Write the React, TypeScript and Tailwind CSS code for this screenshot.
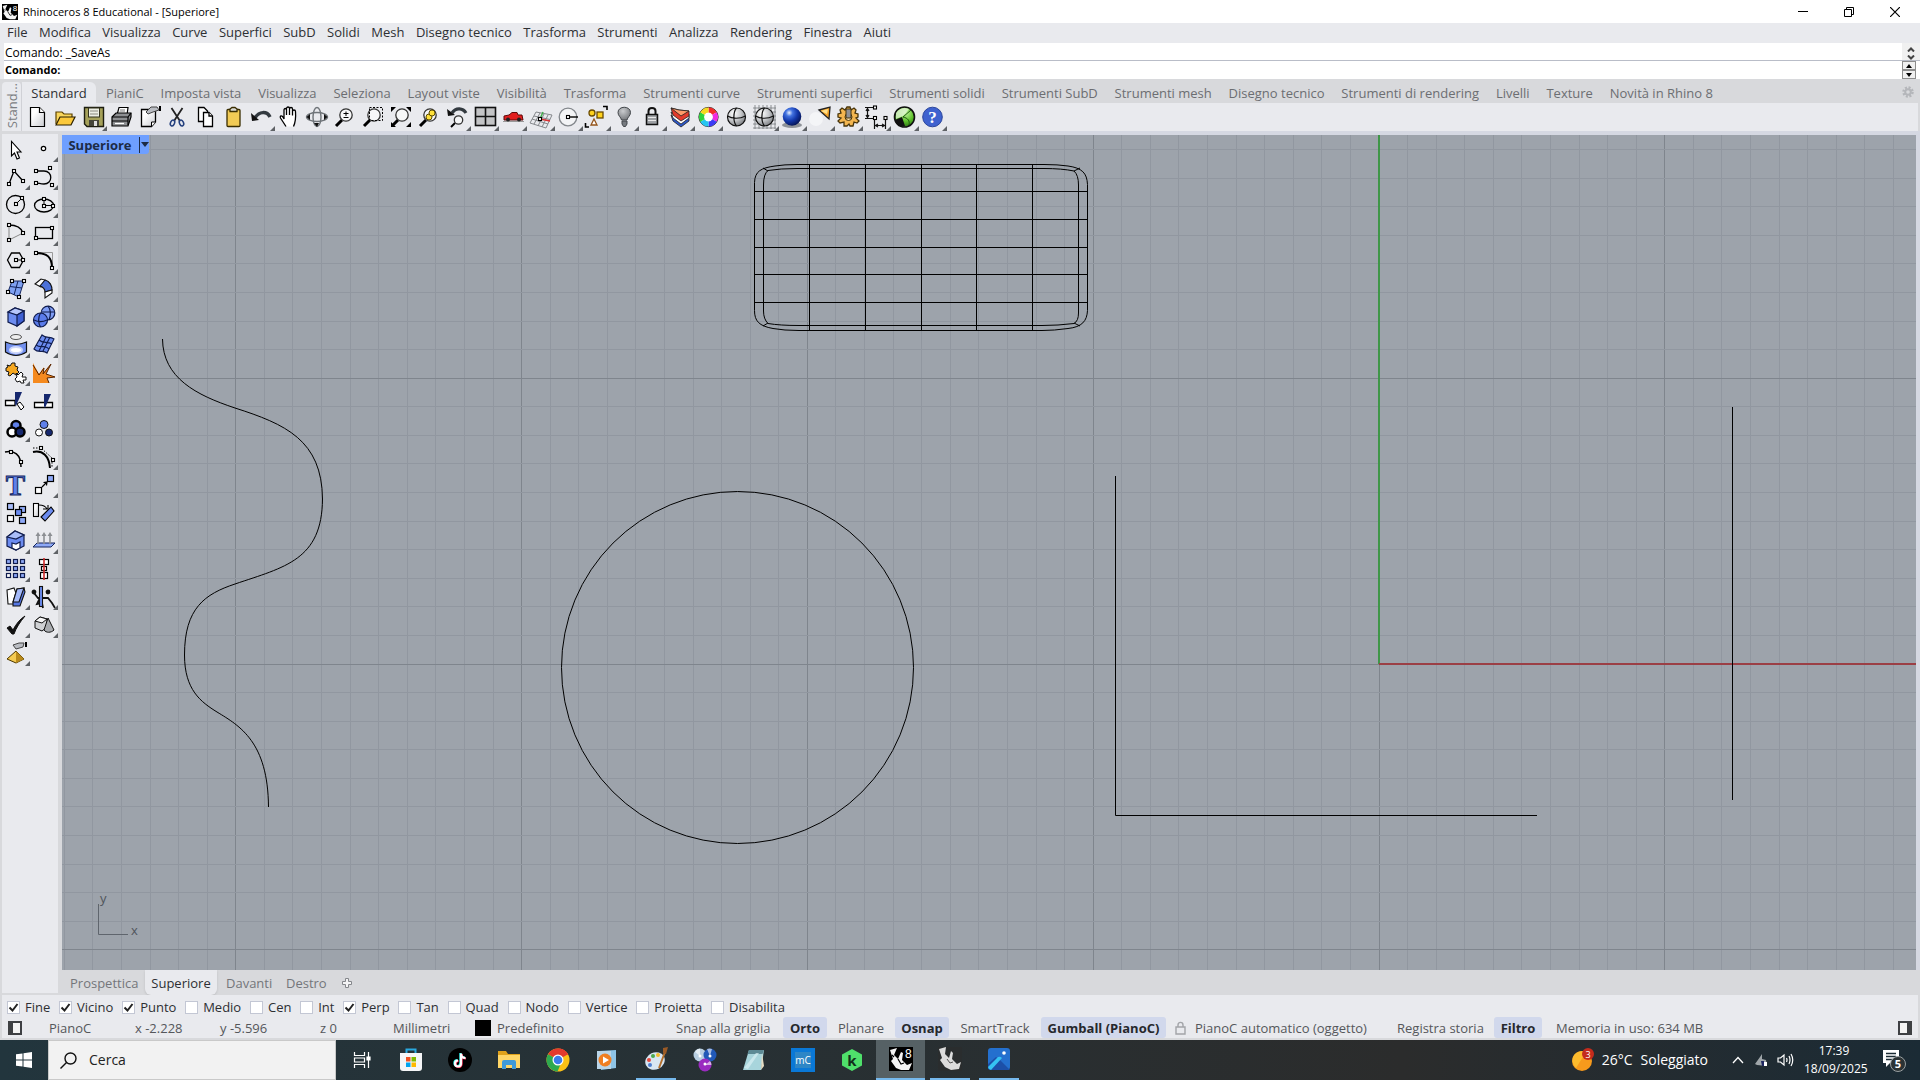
import type { ReactNode } from 'react';

const menus = [
  'File', 'Modifica', 'Visualizza', 'Curve', 'Superfici', 'SubD', 'Solidi', 'Mesh',
  'Disegno tecnico', 'Trasforma', 'Strumenti', 'Analizza', 'Rendering', 'Finestra', 'Aiuti',
];

const toolTabs = [
  'PianiC', 'Imposta vista', 'Visualizza', 'Seleziona', 'Layout viste', 'Visibilità', 'Trasforma',
  'Strumenti curve', 'Strumenti superfici', 'Strumenti solidi', 'Strumenti SubD', 'Strumenti mesh',
  'Disegno tecnico', 'Strumenti di rendering', 'Livelli', 'Texture', 'Novità in Rhino 8',
];

const osnaps = [
  { label: 'Fine', on: true },
  { label: 'Vicino', on: true },
  { label: 'Punto', on: true },
  { label: 'Medio', on: false },
  { label: 'Cen', on: false },
  { label: 'Int', on: false },
  { label: 'Perp', on: true },
  { label: 'Tan', on: false },
  { label: 'Quad', on: false },
  { label: 'Nodo', on: false },
  { label: 'Vertice', on: false },
  { label: 'Proietta', on: false },
  { label: 'Disabilita', on: false },
];

type Tool = { name: string; more?: boolean; art: ReactNode };

// gradients shared by the toolbar icons
function IconGradients() {
  return (
    <svg className="absolute h-0 w-0" aria-hidden="true">
      <defs>
        <linearGradient id="paper" x1="0" y1="0" x2="1" y2="1">
          <stop offset=".3" stopColor="#fff" />
          <stop offset="1" stopColor="#c9cbd0" />
        </linearGradient>
        <radialGradient id="metal" cx=".35" cy=".3" r=".8">
          <stop offset="0" stopColor="#fff" />
          <stop offset=".5" stopColor="#c6c8cb" />
          <stop offset="1" stopColor="#6f7276" />
        </radialGradient>
        <radialGradient id="bulb" cx=".4" cy=".3" r=".8">
          <stop offset="0" stopColor="#c9cbce" />
          <stop offset="1" stopColor="#6c6f73" />
        </radialGradient>
        <radialGradient id="blueball" cx=".35" cy=".3" r=".75">
          <stop offset="0" stopColor="#e8f0ff" />
          <stop offset=".25" stopColor="#4272e0" />
          <stop offset=".6" stopColor="#1236a8" />
          <stop offset="1" stopColor="#05124f" />
        </radialGradient>
        <radialGradient id="greenball" cx=".55" cy=".3" r=".8">
          <stop offset="0" stopColor="#c4f5a0" />
          <stop offset=".5" stopColor="#5fc22c" />
          <stop offset="1" stopColor="#1d5c0c" />
        </radialGradient>
      </defs>
    </svg>
  );
}

// small control-point handle used by most curve icons
function Pt({ x, y }: { x: number; y: number }) {
  return <rect x={x - 1.5} y={y - 1.5} width="3" height="3" fill="#fff" stroke="#000" strokeWidth="1.1" />;
}

const lens = (
  <>
    <path d="M5 23L11 17" stroke="#000" strokeWidth="3" />
    <circle cx="15" cy="12" r="6.200" fill="#f6f7f8" stroke="#333" strokeWidth="1.300" />
  </>
);

const topTools: Tool[] = [
  {
    name: 'Nuovo',
    art: (
      <g stroke="#000" strokeWidth="1.200">
        <path d="M7.500 4.500H16.500L21.500 9.500V23.500H7.500Z" fill="url(#paper)" />
        <path d="M16.500 4.500V9.500H21.500" fill="#fff" />
      </g>
    ),
  },
  {
    name: 'Apri',
    art: (
      <g stroke="#5c4200" strokeWidth="1.200">
        <path d="M5 21V9H11L13 11H21V14" fill="#f9d65c" />
        <path d="M5 22L9 14H24L20 22Z" fill="#fbc93c" stroke="#2b2000" />
      </g>
    ),
  },
  {
    name: 'Salva',
    more: true,
    art: (
      <>
        <path d="M5.500 4.500H24.500V23.500H8L5.500 21Z" fill="#a5a15a" stroke="#1d1d10" strokeWidth="1.400" />
        <rect x="9.500" y="5" width="11" height="9" fill="#eceee4" stroke="#33331d" />
        <path d="M11 8H19M11 11H19" stroke="#8a8a80" />
        <rect x="10" y="17" width="10" height="6" fill="#45453a" />
        <rect x="15" y="18" width="3" height="5" fill="#ddd" />
      </>
    ),
  },
  {
    name: 'Stampa',
    art: (
      <g stroke="#000" strokeWidth="1.200">
        <path d="M10 12L12 4.500H21L20 12" fill="#fff" />
        <path d="M5 14L9 10H24V14L21 23H5Z" fill="#8d8f92" />
        <path d="M5 14H21L24 10" fill="none" />
        <path d="M5 18H21M21 14V22" fill="none" />
        <path d="M8 20.500H17" stroke="#fff" />
        <path d="M13 7H18M12.500 9H18" stroke="#777" strokeWidth="1" />
      </g>
    ),
  },
  {
    name: 'Proprietà',
    art: (
      <>
        <path d="M6.500 6.500H20.500V19L16.500 23.500H6.500Z" fill="url(#paper)" stroke="#000" strokeWidth="1.300" />
        <path d="M16.500 23.500V19H20.500" fill="#fff" stroke="#000" />
        <path d="M11 9L16 4L22 4L24 7L18 9L13 11Z" fill="#b9bcc2" stroke="#444" />
        <path d="M25 3V8" stroke="#000" strokeWidth="2" />
      </>
    ),
  },
  {
    name: 'Taglia',
    art: (
      <g fill="none">
        <path d="M8.500 5L17 18M19.500 5L11 18" stroke="#222" strokeWidth="1.800" />
        <ellipse cx="9.500" cy="20" rx="2" ry="3" stroke="#24407e" strokeWidth="1.500" transform="rotate(25 9.500 20)" />
        <ellipse cx="18.500" cy="20" rx="2" ry="3" stroke="#24407e" strokeWidth="1.500" transform="rotate(-25 18.500 20)" />
      </g>
    ),
  },
  {
    name: 'Copia',
    art: (
      <g fill="#fff" stroke="#000" strokeWidth="1.300">
        <path d="M7.500 4.500H13L16.500 8V18.500H7.500Z" />
        <path d="M12.500 9.500H18L21.500 13V23.500H12.500Z" />
        <path d="M18 9.500V13H21.500" />
      </g>
    ),
  },
  {
    name: 'Incolla',
    art: (
      <g stroke="#3a2d00" strokeWidth="1.300">
        <rect x="8" y="6.500" width="13" height="17" rx="1" fill="#f2cb55" />
        <path d="M11 8.500V6L13 4.500H16L18 6V8.500Z" fill="#d9d9d2" />
      </g>
    ),
  },
  {
    name: 'Annulla',
    more: true,
    art: (
      <>
        <path d="M8 15C12 8 20 8 23 14" fill="none" stroke="#333a40" strokeWidth="3.500" />
        <path d="M4 10L12 17L5 18Z" fill="#111" />
      </>
    ),
  },
  {
    name: 'Panoramica',
    art: (
      <path
        d="M11 23.500L5.500 15C4.500 12.500 7 12 8.500 15L9 16V7C9 5 11.500 5 11.500 7V12V5.500C11.500 3.500 14.500 3.500 14.500 5.500V12V6C14.500 4 17.500 4 17.500 6V12.500V8.500C17.500 6.500 20.500 6.500 20.500 8.500C21 15 21 18 18.500 23.500"
        fill="#fff" stroke="#000" strokeWidth="1.300"
      />
    ),
  },
  {
    name: 'Ruota vista',
    art: (
      <g fill="none" stroke="#6f7479" strokeWidth="1.400">
        <ellipse cx="14" cy="14" rx="10.500" ry="4.500" />
        <ellipse cx="14" cy="14" rx="4" ry="9.500" />
        <path d="M7 11V17L3.500 14ZM21 11V17L24.500 14ZM11 20H16L14 24Z" fill="#111" stroke="none" />
      </g>
    ),
  },
  {
    name: 'Zoom dinamico',
    art: (
      <>
        {lens}
        <path d="M15 8.500V13M12.500 10.500H17.500M12.500 14.500H17.500" stroke="#000" />
      </>
    ),
  },
  {
    name: 'Zoom finestra',
    art: (
      <>
        {lens}
        <rect x="10.500" y="4.500" width="13" height="13" fill="none" stroke="#000" strokeDasharray="2 1.500" />
      </>
    ),
  },
  {
    name: 'Zoom estensioni',
    art: (
      <>
        {lens}
        <path d="M4 4H9L4 9ZM24 4H19L24 9ZM24 24H19L24 19ZM4 24V19L9 24Z" fill="#000" />
      </>
    ),
  },
  {
    name: 'Zoom selezione',
    art: (
      <>
        {lens}
        <circle cx="14" cy="14" r="3" fill="#ffe13a" stroke="#5a4b00" />
        <circle cx="17" cy="10" r="3" fill="#ffe13a" stroke="#5a4b00" />
      </>
    ),
  },
  {
    name: 'Annulla vista',
    more: true,
    art: (
      <>
        <path d="M9 10C13 4 20 5 23 10" fill="none" stroke="#333a40" strokeWidth="3.200" />
        <path d="M4 6L12 12L5 13Z" fill="#111" />
        <path d="M8 24L12 20" stroke="#000" strokeWidth="2" />
        <circle cx="15.500" cy="17" r="4.200" fill="#f6f7f8" stroke="#333" strokeWidth="1.300" />
      </>
    ),
  },
  {
    name: 'Viste',
    more: true,
    art: (
      <>
        <rect x="4.500" y="4.500" width="20" height="18" fill="#c3c4c6" stroke="#111" strokeWidth="1.600" />
        <path d="M14.500 4V23M4 13.500H25" stroke="#111" strokeWidth="1.600" />
      </>
    ),
  },
  {
    name: 'Vista destra',
    more: true,
    art: (
      <>
        <path d="M4 18.500H25" stroke="#999" />
        <path d="M5 17V13L10 12L13 9.500H18L19 12H23L24 17Z" fill="#e21f1f" stroke="#5d0a0a" />
        <circle cx="9" cy="16.500" r="2" fill="#222" />
        <circle cx="20" cy="16.500" r="2" fill="#222" />
      </>
    ),
  },
  {
    name: 'Piano di costruzione',
    more: true,
    art: (
      <g fill="none">
        <path d="M9 9L25 12L19 25L3 20ZM13 10L7 21M17 11L11 23M21 12L15 24M7 13L23 16.500M5 16L21 21" stroke="#85888c" />
        <path d="M13 16L16 9" stroke="#3fae4a" strokeWidth="1.500" />
        <path d="M13 16L23 18" stroke="#d33" strokeWidth="1.500" />
        <Pt x={13} y={16} />
      </g>
    ),
  },
  {
    name: 'Imposta piano',
    more: true,
    art: (
      <>
        <circle cx="13" cy="14" r="8.800" fill="#f3f4f6" stroke="#83878c" strokeWidth="1.300" />
        <path d="M13 14H23" stroke="#000" strokeWidth="1.400" />
        <Pt x={13} y={14} />
      </>
    ),
  },
  {
    name: 'Seleziona oggetti',
    more: true,
    art: (
      <g strokeWidth="1.300">
        <circle cx="9" cy="10" r="3" fill="#ffd21c" stroke="#6b4b00" />
        <rect x="14" y="9" width="6" height="6" fill="#ffd21c" stroke="#6b4b00" />
        <path d="M11 16L14 22H8Z" fill="#fff" stroke="#94541a" />
        <path d="M20 3.500H24V7M2.500 20V24H6" fill="none" stroke="#000" strokeWidth="1.600" />
      </g>
    ),
  },
  {
    name: 'Nascondi',
    more: true,
    art: (
      <g stroke="#43474b">
        <path d="M10.500 17C10 14 7 13 7 9.500C7 2.500 19.500 2.500 19.500 9.500C19.500 13 16.500 14 16 17Z" fill="url(#bulb)" />
        <path d="M11 18H16V21L14.500 23.500H12.500L11 21Z" fill="#777b80" />
      </g>
    ),
  },
  {
    name: 'Blocca',
    more: true,
    art: (
      <g stroke="#111" strokeWidth="1.500">
        <path d="M9.500 12V8C9.500 4 16.500 4 16.500 8V12" fill="none" strokeWidth="2" />
        <rect x="7.500" y="11.500" width="11" height="10" fill="#9da0a4" />
        <path d="M9 14.500H17M9 17.500H17" stroke="#e8e8e8" strokeWidth="1" />
      </g>
    ),
  },
  {
    name: 'Livelli',
    more: true,
    art: (
      <g stroke="#222" strokeWidth=".8">
        <path d="M4 12L6 18L14 24L22 18V13L14 19Z" fill="#2b56c8" />
        <path d="M4 9L6 15L14 21L22 15V11L14 16Z" fill="#fff" />
        <path d="M4 5L6 12L14 18L22 13V8L12 7Z" fill="#e23b2c" />
        <path d="M4 5L12 7L22 8L14 13Z" fill="#ff9c6a" />
      </g>
    ),
  },
  {
    name: 'Colore oggetto',
    more: true,
    art: (
      <g fill="none" strokeWidth="5">
        <circle cx="13.500" cy="14" r="9.600" stroke="#222" strokeWidth="1" fill="#fff" />
        <path d="M13.500 7A7 7 0 0 1 19.500 10.500" stroke="#f32c2c" />
        <path d="M19.500 10.500A7 7 0 0 1 19.500 17.500" stroke="#f02ce0" />
        <path d="M19.500 17.500A7 7 0 0 1 13.500 21" stroke="#3b3bf5" />
        <path d="M13.500 21A7 7 0 0 1 7.500 17.500" stroke="#25c6f0" />
        <path d="M7.500 17.500A7 7 0 0 1 7.500 10.500" stroke="#2fd43c" />
        <path d="M7.500 10.500A7 7 0 0 1 13.500 7" stroke="#f5d91e" />
      </g>
    ),
  },
  {
    name: 'Ombreggiato',
    art: (
      <g stroke="#111" strokeWidth="1.200">
        <circle cx="13.500" cy="14" r="9" fill="url(#metal)" />
        <path d="M13.500 5C10 9 10 19 13.500 23M4.500 13C9 16 17 16 22.500 13" fill="none" />
      </g>
    ),
  },
  {
    name: 'Modalità di visualizzazione',
    more: true,
    art: (
      <>
        <path d="M2 5H25M2 9H25M2 13H25M2 17H25M2 21H25M2 25H25M4 2V26M8 2V26M12 2V26M16 2V26M20 2V26M24 2V26" stroke="#75787c" strokeWidth=".8" />
        <g stroke="#111" strokeWidth="1.200">
          <circle cx="13.500" cy="14" r="9" fill="url(#metal)" />
          <path d="M13.500 5C10 9 10 19 13.500 23M4.500 13C9 16 17 16 22.500 13" fill="none" />
        </g>
      </>
    ),
  },
  {
    name: 'Render',
    more: true,
    art: (
      <>
        <ellipse cx="13" cy="22" rx="10" ry="3" fill="#8e9298" />
        <circle cx="13" cy="13.500" r="9.300" fill="url(#blueball)" />
      </>
    ),
  },
  {
    name: 'Riflettore',
    more: true,
    art: (
      <>
        <circle cx="9" cy="16" r="7" fill="#fff" opacity=".5" />
        <path d="M12 7L23 4L22 16Z" fill="#f5a428" stroke="#222" strokeWidth="1.300" />
        <path d="M14 8L21 6L20 11Z" fill="#ffe08a" />
      </>
    ),
  },
  {
    name: 'Opzioni',
    more: true,
    art: (
      <>
        <path
          d="M12 4H15L16 7L19 5L21 7L20 10L23 11V14L21 15L24 18L22 20L19 19L18 23H15L14 21L12 23H9L9 19L5 20L3 18L6 15L3 14V11L6 10L5 7L7 5L10 7Z"
          fill="#f3b650" stroke="#47340a" strokeWidth="1.300"
        />
        <circle cx="13.500" cy="14" r="3.500" fill="#fbe2ae" stroke="#47340a" />
        <rect x="11" y="6" width="5" height="9" fill="#8f9196" stroke="#47340a" />
      </>
    ),
  },
  {
    name: 'Quota',
    more: true,
    art: (
      <g stroke="#111" strokeWidth="1.200" fill="none">
        <path d="M2 4.500H12M2 15.500H10M4.500 6V14M3 8L4.500 5.500L6 8M3 12L4.500 14.500L6 12" />
        <path d="M11.500 16V26M22.500 16V26M13 22.500H21M15 21L12.500 22.500L15 24M19 21L21.500 22.500L19 24" />
        <Pt x={12} y={4.500} />
        <Pt x={12} y={15} />
        <Pt x={22.500} y={15} />
      </g>
    ),
  },
  {
    name: 'Materiale',
    more: true,
    art: (
      <>
        <circle cx="13.500" cy="14" r="10" fill="url(#greenball)" stroke="#111" strokeWidth="1.600" />
        <path d="M5 10C8 5 14 4 18 6L12 13L5 16Z" fill="#e2f5d6" opacity=".8" />
        <path d="M4 17L11 14L14 23C9 24 5 22 4 17Z" fill="#111" />
        <path d="M12 14L20 7M12 14C17 15 19 18 18 22" fill="none" stroke="#1f5a10" />
      </>
    ),
  },
  {
    name: 'Aiuto',
    more: true,
    art: (
      <>
        <circle cx="13.500" cy="14" r="9.800" fill="#3f62cf" stroke="#2a459c" />
        <text x="13.500" y="20" textAnchor="middle" fontSize="17" fontFamily="Liberation Serif, serif" fontWeight="700" fill="#fff">?</text>
      </>
    ),
  },
];

const sideTools: Tool[] = [
  {
    name: 'Seleziona',
    art: <path d="M9.500 7.500V22L12.500 19L15 25L17.500 24L15 18H19Z" fill="#fff" stroke="#000" strokeWidth="1.100" />,
  },
  { name: 'Punto', more: true, art: <circle cx="13.500" cy="14.500" r="2.200" fill="#fff" stroke="#000" strokeWidth="1.200" /> },
  {
    name: 'Polilinea',
    more: true,
    art: (
      <g>
        <path d="M7 22L12 9L21 19" fill="none" stroke="#000" strokeWidth="1.300" />
        <Pt x={7} y={22} /><Pt x={12} y={9} /><Pt x={21} y={19} />
      </g>
    ),
  },
  {
    name: 'Curva',
    more: true,
    art: (
      <g>
        <path d="M6 9H14C23 9 23 22 14 22C10 22 9 21 6 21" fill="none" stroke="#000" strokeWidth="1.300" />
        <Pt x={6} y={9} /><Pt x={20} y={6} /><Pt x={6} y={21} /><Pt x={22} y={23} />
      </g>
    ),
  },
  {
    name: 'Cerchio',
    more: true,
    art: (
      <g>
        <circle cx="13.500" cy="14.500" r="9" fill="none" stroke="#000" strokeWidth="1.300" />
        <path d="M14 14L20 8" stroke="#000" />
        <Pt x={14} y={14} /><Pt x={20} y={8} />
      </g>
    ),
  },
  {
    name: 'Ellisse',
    more: true,
    art: (
      <g>
        <ellipse cx="14" cy="15.500" rx="9.500" ry="6.500" fill="none" stroke="#000" strokeWidth="1.300" />
        <path d="M14 9V15.500H23" fill="none" stroke="#000" />
        <Pt x={14} y={9} /><Pt x={14} y={16} /><Pt x={23} y={16} />
      </g>
    ),
  },
  {
    name: 'Arco',
    more: true,
    art: (
      <g>
        <path d="M7 7V22L21 15" fill="none" stroke="#888" />
        <path d="M7 7C13 7 19 9 21 15" fill="none" stroke="#000" strokeWidth="1.500" />
        <Pt x={7} y={7} /><Pt x={7} y={22} /><Pt x={21} y={15} />
      </g>
    ),
  },
  {
    name: 'Rettangolo',
    more: true,
    art: (
      <g>
        <rect x="5.500" y="9.500" width="17" height="11" fill="none" stroke="#000" strokeWidth="1.300" />
        <Pt x={22} y={10} /><Pt x={6} y={20} />
      </g>
    ),
  },
  {
    name: 'Poligono',
    more: true,
    art: (
      <g>
        <path d="M5.500 14L9.500 7H17.500L21.500 14L17.500 21.500H9.500Z" fill="none" stroke="#000" strokeWidth="1.300" />
        <path d="M14 14H21" stroke="#000" />
        <Pt x={14} y={14} /><Pt x={21} y={14} />
      </g>
    ),
  },
  {
    name: 'Raccordo',
    more: true,
    art: (
      <g>
        <path d="M6 6.500H22.500V22" fill="none" stroke="#999" />
        <path d="M6 7C17 7 22 11 22 22" fill="none" stroke="#000" strokeWidth="2" />
        <Pt x={6} y={7} /><Pt x={22} y={22} />
      </g>
    ),
  },
  {
    name: 'Superficie',
    more: true,
    art: (
      <g>
        <path d="M10 7H22L17 23L6 18Z" fill="#7ea0f2" stroke="#14255e" />
        <path d="M8 12.500L20 14M16 7L12 21" stroke="#14255e" />
        <Pt x={10} y={7} /><Pt x={22} y={7} /><Pt x={6} y={18} /><Pt x={17} y={23} />
      </g>
    ),
  },
  {
    name: 'Raccordo superfici',
    more: true,
    art: (
      <g stroke="#111" strokeWidth="1.100">
        <path d="M5 10L11 5L15 6L11 13Z" fill="#fff" />
        <path d="M15 6C20 7 22 12 22 16L15 18C15 14 13 13 10 12Z" fill="#4c71d8" />
        <path d="M22 16V19L15 24V18Z" fill="#fff" />
      </g>
    ),
  },
  {
    name: 'Parallelepipedo',
    more: true,
    art: (
      <g stroke="#101c4d" strokeWidth="1.200" transform="translate(0 1)">
        <path d="M6 9L13 5L22 8V18L15 23L6 19Z" fill="#6c8cf0" />
        <path d="M6 9L13 5L22 8L15 12Z" fill="#b6c7fb" />
        <path d="M15 12L22 8V18L15 23Z" fill="#3e5fd2" />
      </g>
    ),
  },
  {
    name: 'Booleana',
    more: true,
    art: (
      <g stroke="#101c4d" strokeWidth="1.200">
        <circle cx="18" cy="11" r="6.800" fill="#7f9df5" />
        <circle cx="10.500" cy="18" r="7" fill="#5b7cea" />
        <path d="M4 18C8 20 13 20 17 18M10.500 11C8 15 8 21 10.500 25M18 4C21 8 21 13 19 18M12 10H25" fill="none" />
      </g>
    ),
  },
  {
    name: 'Estrai curve',
    more: true,
    art: (
      <g stroke="#111" transform="translate(0 2)">
        <ellipse cx="14" cy="5" rx="5.500" ry="2.500" fill="#eee" stroke="#555" />
        <path d="M3.500 10C10 13 18 13 24.500 10V20C18 24.500 10 24.500 3.500 20Z" fill="#7290ee" strokeWidth="1.200" />
        <ellipse cx="14" cy="18" rx="6" ry="3" fill="#fff" stroke="#ccd6fa" strokeWidth="2" />
      </g>
    ),
  },
  {
    name: 'Mesh',
    more: true,
    art: (
      <g stroke="#101c4d" strokeWidth="1.100" transform="translate(0 1)">
        <path d="M12 4C16 8 20 5 24 8L17 22C13 18 9 23 4 18Z" fill="#6c8cf0" />
        <path d="M9 9C13 13 17 10 22 13M6 14C11 18 15 13 19 18M16 6L9 20M20 6L13 20" fill="none" />
      </g>
    ),
  },
  {
    name: 'Esplodi gruppo',
    more: true,
    art: (
      <g stroke="#111" transform="translate(0 2)">
        <path d="M5 5L8 6L10 3L13 3L13 6L16 7L15 10L17 12L14 15L11 13L8 16L6 15L7 12L4 11L4 8L6 7Z" fill="#f6a821" />
        <path d="M14 13L16 15L19 12L21 14L20 17L24 17L24 20L21 20L22 23L19 23L18 21L15 22L13 19L15 17Z" fill="#fff" />
      </g>
    ),
  },
  {
    name: 'Esplodi',
    art: (
      <g transform="translate(0 2)">
        <path d="M3 23V3L9 14L14 7L13 13L21 4L16 14L25 17L17 18L19 23Z" fill="#f58a1f" />
        <path d="M3 5L9 15L14 8L13 14L21 4L16 14L25 17L17 18L19 23" fill="none" stroke="#5a2500" />
      </g>
    ),
  },
  {
    name: 'Tronca',
    art: (
      <g transform="translate(0 2)">
        <path d="M3.500 12.500H13V17.500H3.500Z" fill="#fff" stroke="#000" strokeWidth="1.300" />
        <path d="M15 16L18 14L22 19L19 22Z" fill="#fff" stroke="#000" />
        <path d="M13 4H20L14 18L13 16Z" fill="#16286e" />
      </g>
    ),
  },
  {
    name: 'Dividi',
    art: (
      <g transform="translate(0 2)">
        <path d="M4.500 14.500H22.500V19.500H4.500Z" fill="#fff" stroke="#000" strokeWidth="1.300" />
        <path d="M14 6H21L15 20L14 18Z" fill="#16286e" />
      </g>
    ),
  },
  {
    name: 'Raggruppa',
    more: true,
    art: (
      <g stroke="#000" strokeWidth="2.500" transform="translate(0 1)">
        <circle cx="14" cy="10.500" r="4.500" fill="#5f80ea" />
        <circle cx="10" cy="17" r="4.500" fill="#fff" />
        <circle cx="18" cy="17" r="4.500" fill="#16286e" />
      </g>
    ),
  },
  {
    name: 'Separa',
    art: (
      <g stroke="#111" transform="translate(0 1)">
        <circle cx="14" cy="9.500" r="4" fill="#5f80ea" />
        <circle cx="9" cy="17.500" r="3.500" fill="#fff" />
        <circle cx="19" cy="17.500" r="3.500" fill="#16286e" />
      </g>
    ),
  },
  {
    name: 'Modifica punti',
    art: (
      <g transform="translate(0 1)">
        <path d="M3 9C12 7 19 11 19 24" fill="none" stroke="#000" strokeWidth="1.500" />
        <Pt x={9} y={9} /><Pt x={19} y={19} />
      </g>
    ),
  },
  {
    name: 'Punti di controllo',
    more: true,
    art: (
      <g transform="translate(0 1)">
        <path d="M3 5H11L22 15V24" fill="none" stroke="#000" strokeDasharray="1.500 1.500" />
        <path d="M3 9C13 7 19 13 20 25" fill="none" stroke="#000" strokeWidth="2" />
        <Pt x={11} y={5} /><Pt x={23} y={17} />
      </g>
    ),
  },
  {
    name: 'Testo',
    art: (
      <text x="13.500" y="25" textAnchor="middle" fontSize="29" fontFamily="Liberation Serif, serif" fontWeight="700" fill="#5f80ea" stroke="#14255e">
        T
      </text>
    ),
  },
  {
    name: 'Sposta',
    more: true,
    art: (
      <g stroke="#000" strokeWidth="1.200" transform="translate(0 2)">
        <rect x="17.500" y="3.500" width="6" height="6" fill="#8ea9f7" />
        <rect x="5.500" y="15.500" width="6" height="6" fill="#fff" />
        <path d="M12 15L17 10M13.500 10.500L17 10L16.500 13.500" fill="none" />
      </g>
    ),
  },
  {
    name: 'Copia oggetti',
    art: (
      <g stroke="#000" strokeWidth="1.200">
        <rect x="5.500" y="5.500" width="6" height="6" fill="#a9bdf9" />
        <rect x="5.500" y="17.500" width="6" height="6" fill="#fff" />
        <rect x="17.500" y="8.500" width="6" height="6" fill="#8ea9f7" />
        <rect x="13.500" y="11.500" width="6" height="6" fill="#6c8cf0" />
        <rect x="17.500" y="19.500" width="6" height="6" fill="#8ea9f7" />
      </g>
    ),
  },
  {
    name: 'Ruota',
    art: (
      <g stroke="#000" strokeWidth="1.100" transform="translate(0 1)">
        <rect x="3.500" y="4.500" width="5" height="13" fill="url(#paper)" />
        <path d="M9 6C13 6 16 8 17 10M13 10H18V6" fill="none" />
        <path d="M11 18L21 8L24 12L15 22Z" fill="#6c8cf0" />
      </g>
    ),
  },
  {
    name: 'Scala',
    more: true,
    art: (
      <g stroke="#101c4d" strokeWidth="1.200" transform="translate(0 1)">
        <path d="M5 10L13 4L22 8V19L14 23L5 19Z" fill="#6c8cf0" />
        <path d="M5 10L13 4L22 8L14 12Z" fill="#a9bdf9" />
        <path d="M10 16L14 17L18 15V21L14 23L10 21Z" fill="#fff" />
      </g>
    ),
  },
  {
    name: 'Estrudi',
    more: true,
    art: (
      <g transform="translate(0 2)">
        <path d="M3 19L7 15H25L21 19Z" fill="#8ea9f7" stroke="#14255e" />
        <path d="M8 16V6M14 16V6M20 16V6" stroke="#8c8f93" strokeWidth="1.600" />
        <path d="M5.500 8L8 4L10.500 8ZM11.500 8L14 4L16.500 8ZM17.500 8L20 4L22.500 8Z" fill="#8c8f93" />
      </g>
    ),
  },
  {
    name: 'Serie',
    more: true,
    art: (
      <g stroke="#101c4d" strokeWidth="1.200">
        {[7, 14, 21].map((y) =>
          [4, 11, 18].map((x) => (
            <rect key={`${x}-${y}`} x={x + 0.5} y={y - 1.5} width="4" height="4" fill={x === 4 && y === 21 ? '#fff' : '#8ea9f7'} />
          )),
        )}
      </g>
    ),
  },
  {
    name: 'Allinea',
    more: true,
    art: (
      <g fill="#fff" stroke="#000" strokeWidth="1.200" transform="translate(0 1)">
        <rect x="9.500" y="4.500" width="9" height="5" />
        <rect x="11.500" y="11.500" width="5" height="4" />
        <rect x="10.500" y="17.500" width="7" height="6" />
        <path d="M14 3V25" stroke="#d02a2a" strokeWidth="1.600" />
      </g>
    ),
  },
  {
    name: 'Orienta',
    more: true,
    art: (
      <g stroke="#111" strokeWidth="1.100" transform="translate(0 2)">
        <path d="M5 6L12 4L14 9V20L6 20Z" fill="#fff" />
        <path d="M15 5L22 4L23 8L18 22L11 22V18Z" fill="#5577e4" />
        <path d="M15 5L22 4L17 18L11 18Z" fill="#a4b9f8" />
      </g>
    ),
  },
  {
    name: 'Piega',
    more: true,
    art: (
      <g stroke="#111" strokeWidth="1.800" fill="none" transform="translate(0 2)">
        <path d="M4 9L8 14H18L22 19L25 24M10 14L7 20L12 19L13 24" />
        <circle cx="4" cy="8" r="1.500" fill="#111" />
        <circle cx="18" cy="8" r="1.500" fill="#111" />
        <rect x="9.500" y="2.500" width="3" height="20" fill="#6c8cf0" strokeWidth="1.100" />
      </g>
    ),
  },
  {
    name: 'Verifica',
    more: true,
    art: <path d="M5 18L8 16L11 20C14 14 18 9 23 6C18 12 14 18 12 24H10Z" fill="#111" stroke="#111" />,
  },
  {
    name: 'Solidi',
    more: true,
    art: (
      <g stroke="#111" transform="translate(0 2)">
        <path d="M5 9L10 5L17 7V15L12 19L5 16Z" fill="#cfd1d4" />
        <path d="M5 9L10 5L17 7L12 11Z" fill="#f6f6f7" />
        <path d="M18 6L24 18C21 21 16 21 14 18Z" fill="#a9acb0" />
      </g>
    ),
  },
  {
    name: 'Evidenzia',
    more: true,
    art: (
      <g transform="translate(0 2)">
        <path d="M14 11L5 19L14 23L22 19Z" fill="#f4ca50" stroke="#4b3600" />
        <path d="M14 11V23L22 19Z" fill="#b98a1c" />
        <path d="M11 5L17 3L22 3L21 7L14 9Z" fill="#b9bcc2" stroke="#444" />
        <path d="M24 2V7" stroke="#000" strokeWidth="2" />
      </g>
    ),
  },
];

function ToolButton({ tool }: { tool: Tool }) {
  return (
    <button aria-label={tool.name} className="h-7 w-7 shrink-0">
      <svg viewBox="0 0 28 28" className="h-7 w-7">
        {tool.art}
        {tool.more && <path d="M28 23V28H23Z" fill="#5f6266" />}
      </svg>
    </button>
  );
}

function RhinoMark({ className }: { className: string }) {
  return (
    <svg viewBox="0 0 24 24" className={className}>
      <rect width="24" height="24" fill="#000" />
      <path d="M1 3L8 1L5 8L9 12L12 5L14 6L13 13L18 18L23 16L20 23L12 23L7 21L2 14L4 12Z" fill="#f4f4f4" />
      <path d="M9 12L12 17L15 16M3 8L5 10" fill="none" stroke="#000" strokeWidth="1.200" />
      <text x="16" y="11" fontSize="12" fontFamily="Liberation Sans, sans-serif" fill="#fff">8</text>
    </svg>
  );
}

function TitleBar() {
  return (
    <header className="flex h-[23px] items-center bg-white pr-[2px] pl-[2px] text-black">
      <RhinoMark className="h-4 w-4" />
      <h1 className="pl-[5px] text-[11px]">Rhinoceros 8 Educational - [Superiore]</h1>
      <div className="ml-auto flex h-full">
        <button aria-label="Riduci a icona" className="flex w-[46px] items-center justify-center">
          <svg viewBox="0 0 10 10" className="h-[10px] w-[10px]"><path d="M0 4.500H10" stroke="#000" /></svg>
        </button>
        <button aria-label="Ripristina" className="flex w-[46px] items-center justify-center">
          <svg viewBox="0 0 10 10" className="h-[10px] w-[10px]" fill="none" stroke="#000">
            <path d="M.5 2.500H7.500V9.500H.5ZM2.500 2.500V.5H9.500V7.500H7.500" />
          </svg>
        </button>
        <button aria-label="Chiudi" className="flex w-[46px] items-center justify-center">
          <svg viewBox="0 0 10 10" className="h-[10px] w-[10px]"><path d="M0 0L10 10M10 0L0 10" stroke="#000" strokeWidth="1.200" /></svg>
        </button>
      </div>
    </header>
  );
}

function CommandArea() {
  return (
    <section className="flex h-9 bg-white text-black">
      <div className="w-1 bg-[#e9eaee]" />
      <div className="flex min-w-0 flex-1 flex-col">
        <p className="h-[18px] border-b border-[#b9bdc8] pt-[2px] pl-px text-[12px] leading-[15px]">Comando: _SaveAs</p>
        <label className="flex h-[18px] items-center pl-px text-[11px] font-bold">
          Comando:
          <input className="ml-1 h-4 flex-1 outline-none" />
        </label>
      </div>
      <div className="flex w-[18px] flex-col">
        <div className="flex h-[18px] flex-col items-center justify-between border-b border-[#b9bdc8] bg-[#f0f0f0] pt-1">
          <svg viewBox="0 0 8 5" className="h-[5px] w-2"><path d="M1 4.500L4 1.500L7 4.500" fill="none" stroke="#444" strokeWidth="2" /></svg>
          <svg viewBox="0 0 8 5" className="h-[5px] w-2"><path d="M1 .5L4 3.500L7 .5" fill="none" stroke="#444" strokeWidth="2" /></svg>
        </div>
        <button aria-label="Su" className="flex h-[9px] w-[14px] items-center justify-center border border-[#8d8d8d] bg-[#f0f0f0]">
          <svg viewBox="0 0 6 4" className="h-1 w-[6px]"><path d="M3 0L6 4H0Z" /></svg>
        </button>
        <button aria-label="Giù" className="flex h-[9px] w-[14px] items-center justify-center border border-[#8d8d8d] bg-[#f0f0f0]">
          <svg viewBox="0 0 6 4" className="h-1 w-[6px]"><path d="M0 0H6L3 4Z" /></svg>
        </button>
      </div>
    </section>
  );
}

function ToolbarArea() {
  return (
    <section className="flex bg-[#d8d9dc] pl-[2px]">
      <div className="mt-[3px] flex w-5 items-end justify-center rounded-t border-r border-[#d0d1d6] bg-[#e9eaee] pb-[3px]">
        <span className="rotate-180 text-[13px] leading-4 text-[#7b7d81] [writing-mode:vertical-rl]">Stand...</span>
      </div>
      <div className="min-w-0 flex-1">
        <div className="flex h-6 items-end text-[13px] text-[#6c6e72]">
          <button className="h-[21px] w-[74px] rounded-tr-md bg-[#e9eaee] pt-px text-[#2d2f33]">Standard</button>
          <nav className="ml-[10px] flex h-[21px] w-[1607px] items-center justify-between pt-px">
            {toolTabs.map((tab) => (
              <button key={tab} className="whitespace-nowrap">{tab}</button>
            ))}
          </nav>
          <button aria-label="Opzioni barra" className="mr-[6px] mb-[5px] ml-auto">
            <svg viewBox="0 0 12 12" className="h-3 w-3">
              <circle cx="6" cy="6" r="4.500" fill="none" stroke="#b4b6ba" strokeWidth="2.500" strokeDasharray="2 1.530" />
              <circle cx="6" cy="6" r="2.800" fill="none" stroke="#b4b6ba" strokeWidth="2" />
            </svg>
          </button>
        </div>
        <div className="mr-[2px] flex h-7 bg-[#e9eaee] pl-px">
          {topTools.map((tool) => (
            <ToolButton key={tool.name} tool={tool} />
          ))}
        </div>
      </div>
    </section>
  );
}

const STEP = 28.58;
const ORIGIN = { x: 1317, y: 529 };

// grid lines every STEP px around the construction plane origin, every tenth one is major
function gridLines(origin: number, from: number, to: number) {
  const lines: { at: number; major: boolean }[] = [];
  for (let i = from; i <= to; i++) {
    lines.push({ at: Math.floor(origin + i * STEP) + 0.5, major: i % 10 === 0 });
  }
  return lines;
}

function Viewport() {
  const cols = gridLines(ORIGIN.x, -46, 40);
  const rows = gridLines(ORIGIN.y, -18, 20);

  return (
    <main className="relative min-h-0 flex-1 overflow-hidden bg-[#9da3ab]">
      <svg className="absolute inset-0 h-full w-full" fill="none">
        <g strokeWidth="1">
          {cols.map((l) => (
            <path key={`c${l.at}`} d={`M${l.at} 0V2000`} stroke={l.major ? '#7f858d' : '#9197a0'} />
          ))}
          {rows.map((l) => (
            <path key={`r${l.at}`} d={`M0 ${l.at}H4000`} stroke={l.major ? '#7f858d' : '#9197a0'} />
          ))}
        </g>
        <path d="M1317 0V529" stroke="#3f9648" strokeWidth="2" />
        <path d="M1317 529H4000" stroke="#9b3f45" strokeWidth="2" />

        <g stroke="#000">
          {/* rounded box with its isocurves */}
          <path d="M692.500 47.500C693 36 699 33 713 31Q722 29.500 735 29.500H982Q996 29.500 1006 31C1020 33 1025 38 1025.500 49.500V175.500C1025 186 1020 192 1006 193.500Q992 195.500 980 195.500H737Q722 195.500 711 193.500C697 191 692.500 186 692.500 175.500Z" />
          <path d="M701.500 50Q701.500 39 706 35.500Q718 33.500 735 33.500H982Q1000 33.500 1012 36Q1016.500 40 1016.500 50V178Q1016.500 186 1012 188.500Q996 190.500 980 190.500H737Q718 190.500 706 188.500Q701.500 184 701.500 176Z" />
          <path d="M747.500 29V195M803.500 29V195M859.500 29V195M914.500 29V195M970.500 29V195" />
          <path d="M692 56.500H1025M692 84.500H1025M692 112.500H1025M692 139.500H1025M692 167.500H1025" />
          <path d="M701 33L706 36M1018 33L1012 36M701 191L706 188M1018 191L1012 188" />

          <path d="M100.500 204C101 243 134 260 173 273C223 289 260 305 260.500 364C260 425 223 432 173 449C143 459 122.500 473 122.500 520C122.500 555 139 567 155 577C178 591 206 607 206.500 672" />
          <circle cx="675.500" cy="532.500" r="176" />
          <path d="M1053.500 341V680.500H1475" />
          <path d="M1670.500 272V665" />
        </g>

        <path d="M36.500 769V799.500H66" stroke="#5f656d" />
        <g fill="#50555c" fontSize="13">
          <text x="38" y="768">y</text>
          <text x="69" y="800">x</text>
        </g>
      </svg>

      <div className="relative flex h-[19px] w-[87px] rounded-br-[3px] bg-[#6e9fff] text-[13px] font-bold text-[#1d2b45]">
        <button className="w-[76px]">Superiore</button>
        <button aria-label="Menu vista" className="flex flex-1 items-center justify-center">
          <span className="h-4 w-px bg-[#1d2b45]" />
          <svg viewBox="0 0 8 5" className="ml-px h-[5px] w-2"><path d="M0 0H8L4 5Z" fill="#1d2b45" /></svg>
        </button>
      </div>
    </main>
  );
}

function ViewTabs() {
  return (
    <nav className="flex h-[25px] items-center bg-[#d8d9dc] pl-2 text-[13px] text-[#74767a]">
      <button className="w-[66px]">Prospettica</button>
      <button className="mx-[9px] h-full w-[72px] rounded-b-md bg-[#e9eaee] text-[#2d2f33] shadow-sm">Superiore</button>
      <button className="w-11">Davanti</button>
      <button className="mr-5 ml-4 w-9">Destro</button>
      <button aria-label="Nuova vista">
        <svg viewBox="0 0 10 10" className="h-[10px] w-[10px]">
          <path d="M3.500 .5H6.500V3.500H9.500V6.500H6.500V9.500H3.500V6.500H.5V3.500H3.500Z" fill="#f4f4f5" stroke="#85878b" />
        </svg>
      </button>
    </nav>
  );
}

function OsnapBar() {
  return (
    <div className="pl-[5px]">
      <div className="flex h-[22px] w-[778px] items-center justify-between pt-[2px] text-[13px] text-[#2d2f33]">
        {osnaps.map((o) => (
          <label key={o.label} className="flex items-center gap-[5px]">
            <span className="grid h-[13px] w-[13px] place-items-center">
              <input
                type="checkbox"
                defaultChecked={o.on}
                className="peer col-start-1 row-start-1 h-[13px] w-[13px] appearance-none border border-[#c3c7d4] bg-white"
              />
              <svg viewBox="0 0 11 11" className="pointer-events-none invisible col-start-1 row-start-1 h-[11px] w-[11px] peer-checked:visible">
                <path d="M1.500 5.500L4.500 8.500L9.500 2" fill="none" stroke="#222" strokeWidth="2" />
              </svg>
            </span>
            {o.label}
          </label>
        ))}
      </div>
    </div>
  );
}

function StatusBar() {
  const pill = 'h-[21px] rounded-[3px] bg-[#d1d8ec] font-bold text-[#26282c]';
  return (
    <div className="flex h-[21px] items-center whitespace-nowrap px-[6px] text-[13px] text-[#55575b]">
      <button aria-label="Pannello sinistro" className="mr-[27px]">
        <svg viewBox="0 0 14 14" className="h-[14px] w-[14px]"><path d="M1 1H13V13H1Z" fill="#f4f4f4" stroke="#3e4043" strokeWidth="2" /><path d="M1 1H5V13H1Z" fill="#3e4043" /></svg>
      </button>
      <button className="w-[86px] text-left">PianoC</button>
      <span className="w-[85px]">x -2.228</span>
      <span className="w-[100px]">y -5.596</span>
      <span className="w-[73px]">z 0</span>
      <button className="w-[82px] text-left">Millimetri</button>
      <button className="flex w-[201px] items-center gap-[6px]">
        <span className="h-4 w-4 bg-black" />
        Predefinito
      </button>
      <button className="w-[107px] text-left">Snap alla griglia</button>
      <button className={`w-11 ${pill}`}>Orto</button>
      <button className="w-[68px]">Planare</button>
      <button className={`w-[54px] ${pill}`}>Osnap</button>
      <button className="w-[92px]">SmartTrack</button>
      <button className={`w-[125px] ${pill}`}>Gumball (PianoC)</button>
      <button className="ml-[9px] flex w-[222px] items-center gap-[9px]">
        <svg viewBox="0 0 11 14" className="h-[14px] w-[11px]" fill="none" stroke="#a2a4a8" strokeWidth="1.400">
          <path d="M1 6H10V13H1ZM3 6V4C3 .5 8 .5 8 4V6" />
        </svg>
        PianoC automatico (oggetto)
      </button>
      <button className="w-[97px] text-left">Registra storia</button>
      <button className={`mr-[14px] w-12 ${pill}`}>Filtro</button>
      <span>Memoria in uso: 634 MB</span>
      <button aria-label="Pannello destro" className="ml-auto">
        <svg viewBox="0 0 14 14" className="h-[14px] w-[14px]"><path d="M1 1H13V13H1Z" fill="#f4f4f4" stroke="#3e4043" strokeWidth="2" /><path d="M9 1H13V13H9Z" fill="#3e4043" /></svg>
      </button>
    </div>
  );
}

const apps: { name: string; state?: 'open' | 'active'; art: ReactNode }[] = [
  {
    name: 'Visualizzazione attività',
    art: (
      <g fill="none" stroke="#fff" strokeWidth="1.200">
        <path d="M4.500 4V7.500H14.500V4M4.500 20V16.500H14.500V20M4.500 10H14.500V14H4.500ZM18.500 4V20" />
        <path d="M17 9H20V12H17Z" fill="#fff" />
      </g>
    ),
  },
  {
    name: 'Microsoft Store',
    art: (
      <>
        <path d="M7.500 6V1.500H16.500V6" fill="none" stroke="#2aa9e0" strokeWidth="2" />
        <path d="M1 5H23V20Q23 23 20 23H4Q1 23 1 20Z" fill="#f5f6f7" />
        <path d="M7 9H11.500V13.500H7Z" fill="#f05022" />
        <path d="M12.500 9H17V13.500H12.500Z" fill="#7fba00" />
        <path d="M7 14.500H11.500V19H7Z" fill="#00a4ef" />
        <path d="M12.500 14.500H17V19H12.500Z" fill="#ffb900" />
      </>
    ),
  },
  {
    name: 'TikTok',
    art: (
      <>
        <circle cx="12" cy="12" r="12" fill="#000" />
        <g fill="none" strokeWidth="2.200">
          <path d="M12.400 5V15A3 3 0 1 1 9.400 12M12.400 5C12.400 8 14.400 9.500 17 9.500" stroke="#25f4ee" />
          <path d="M13.600 6V16A3 3 0 1 1 10.600 13M13.600 6C13.600 9 15.600 10.500 18 10.500" stroke="#fe2c55" />
          <path d="M13 5.500V15.500A3 3 0 1 1 10 12.500M13 5.500C13 8.500 15 10 17.500 10" stroke="#fff" />
        </g>
      </>
    ),
  },
  {
    name: 'Esplora file',
    art: (
      <>
        <path d="M1 3H9L11 6H23V20H1Z" fill="#e0a21b" />
        <path d="M1 7H23V20H1Z" fill="#ffd667" />
        <path d="M5 21V14Q5 12 7 12H17Q19 12 19 14V21H15V17H9V21Z" fill="#3f9ad8" />
      </>
    ),
  },
  {
    name: 'Chrome',
    art: (
      <>
        <circle cx="12" cy="12" r="11.500" fill="#fbc116" />
        <path d="M12 12L2 6.300A11.500 11.500 0 0 1 22 6.300Z" fill="#e33b2e" />
        <path d="M12 12L2 6.300A11.500 11.500 0 0 0 11.500 23.500L15.500 14Z" fill="#2da94f" />
        <path d="M12 6.500H22.200A11.500 11.500 0 0 0 12 .5Z" fill="#e33b2e" />
        <circle cx="12" cy="12" r="5.500" fill="#fff" />
        <circle cx="12" cy="12" r="4.300" fill="#3a7cec" />
      </>
    ),
  },
  {
    name: 'Media Player',
    art: (
      <>
        <path d="M4 3L21 2V20L6 22Z" fill="#8ec4e6" />
        <path d="M2 3H16V21H2Z" fill="#b9d5e8" />
        <circle cx="10" cy="12" r="6.500" fill="#f07f22" />
        <path d="M8 8.500L14 12L8 15.500Z" fill="#fff" />
      </>
    ),
  },
  {
    name: 'Paint',
    state: 'open',
    art: (
      <>
        <ellipse cx="11" cy="14" rx="10" ry="8.500" fill="#d8e6f2" transform="rotate(-25 11 14)" />
        <circle cx="5" cy="13" r="2" fill="#e5483c" />
        <circle cx="9" cy="9" r="2" fill="#4aa94f" />
        <circle cx="14" cy="8" r="2" fill="#f2bb2d" />
        <circle cx="6" cy="18" r="2" fill="#4e7fd0" />
        <path d="M21 5L15 21" stroke="#b4702d" strokeWidth="2" />
        <path d="M19 1L24 0L22 7L19 6Z" fill="#9a5a26" />
      </>
    ),
  },
  {
    name: 'Masterizzazione',
    art: (
      <>
        <circle cx="7" cy="7" r="6.500" fill="#b8cfe2" />
        <circle cx="17" cy="7" r="6.500" fill="#2159b8" />
        <circle cx="12" cy="17" r="6.500" fill="#9a2bc0" />
        <path d="M7 8L2 4A6.500 6.500 0 0 1 7 .5ZM17 8L14 1A6.500 6.500 0 0 1 19 1ZM12 17L17 13A6.500 6.500 0 0 1 18.500 17Z" fill="#fff" opacity=".6" />
        <circle cx="7" cy="8" r="1.500" fill="#fff" />
        <circle cx="17" cy="8" r="1.500" fill="#fff" />
        <circle cx="12" cy="16" r="1.500" fill="#fff" />
      </>
    ),
  },
  {
    name: 'Blocco note',
    art: (
      <>
        <path d="M7 2H22L19 22H1Z" fill="#a8d5dc" />
        <path d="M7 2H22L20.500 6H5.500Z" fill="#5d8a95" />
        <path d="M20 5L22 18L19 22Z" fill="#e6dcc2" />
        <path d="M2 20L14 5L17 5L6 21Z" fill="#d9f0f3" opacity=".7" />
      </>
    ),
  },
  {
    name: 'mC',
    art: (
      <>
        <rect width="24" height="24" fill="#0a78d6" />
        <rect x="4" y="4" width="16" height="16" fill="#2e86c6" />
        <text x="12" y="16" textAnchor="middle" fontSize="10" fill="#fff">mC</text>
      </>
    ),
  },
  {
    name: 'Kaspersky',
    art: (
      <>
        <path d="M12 1L22 6.500V17.500L12 23L2 17.500V6.500Z" fill="#4fe06b" />
        <text x="12" y="17.500" textAnchor="middle" fontSize="15" fontWeight="700" fill="#12301c">k</text>
      </>
    ),
  },
  { name: 'Rhinoceros 8', state: 'active', art: <RhinoMark className="h-6 w-6" /> },
  {
    name: 'Rhino',
    state: 'open',
    art: (
      <>
        <rect width="24" height="24" fill="#2a2d2e" />
        <path d="M1 2L8 0L7 7L11 11L13 4L15 6L14 12L19 17L23 15L21 22L13 23L7 20L2 13L4 11Z" fill="#dcdcdc" />
        <path d="M9 12L12 16L15 15" fill="none" stroke="#555" />
      </>
    ),
  },
  {
    name: 'Foto',
    state: 'open',
    art: (
      <>
        <rect x="1" y="1" width="22" height="22" rx="3" fill="#2470cf" />
        <path d="M1 17L9 10L13 13L23 23H4Q1 23 1 20Z" fill="#1c4fa8" />
        <path d="M1 20L11 10Q13 9 15 11L4 23Q1 22 1 20Z" fill="#35c3f3" />
        <circle cx="17" cy="6" r="1.800" fill="#fff" />
      </>
    ),
  },
];

function Taskbar() {
  return (
    <footer className="flex h-10 shrink-0 items-center bg-linear-to-r from-[#22353d] via-[#2b2c2c] via-73% to-[#1b2b35] text-[14px] text-white">
      <button aria-label="Start" className="flex h-full w-12 items-center justify-center">
        <svg viewBox="0 0 16 16" className="h-4 w-4" fill="#fff">
          <path d="M0 2.300L6.500 1.400V7.500H0ZM7.500 1.200L16 0V7.500H7.500ZM0 8.500H6.500V14.600L0 13.700ZM7.500 8.500H16V16L7.500 14.800Z" />
        </svg>
      </button>
      <label className="flex h-full w-72 items-center gap-3 border border-[#c9c9c9] bg-[#f2f2f2] pl-[11px]">
        <svg viewBox="0 0 17 17" className="h-[17px] w-[17px]" fill="none" stroke="#111" strokeWidth="1.400">
          <circle cx="10.500" cy="6.500" r="5.500" />
          <path d="M6.500 10.500L.5 16.500" />
        </svg>
        <input aria-label="Cerca" placeholder="Cerca" className="w-52 outline-none placeholder:text-[#222]" />
      </label>
      <div className="ml-px flex h-full">
        {apps.map((app) => (
          <button
            key={app.name}
            aria-label={app.name}
            className={`flex h-full w-[49px] flex-col items-center ${app.state === 'active' ? 'bg-[#566165]' : ''}`}
          >
            <span className="flex flex-1 items-center">
              <svg viewBox="0 0 24 24" className="h-6 w-6">{app.art}</svg>
            </span>
            {app.state && <span className={`h-[2px] bg-[#76b9ed] ${app.state === 'active' ? 'w-full' : 'w-10'}`} />}
          </button>
        ))}
      </div>
      <div className="ml-auto flex h-full items-center">
        <button className="flex items-center gap-2">
          <svg viewBox="0 0 22 24" className="h-6 w-[22px]">
            <circle cx="10" cy="13" r="10" fill="#f79a1c" />
            <path d="M2 7A10 10 0 0 1 14 4L4 20A10 10 0 0 1 2 7Z" fill="#fdbb2d" />
            <circle cx="16" cy="6" r="6" fill="#c42b1c" />
            <text x="16" y="9.500" textAnchor="middle" fontSize="9" fill="#fff">3</text>
          </svg>
          <span>26°C</span>
          <span>Soleggiato</span>
        </button>
        <button aria-label="Icone nascoste" className="ml-6">
          <svg viewBox="0 0 12 8" className="h-2 w-3"><path d="M1 7L6 1.500L11 7" fill="none" stroke="#fff" strokeWidth="1.300" /></svg>
        </button>
        <button aria-label="Rete" className="ml-[10px]">
          <svg viewBox="0 0 14 14" className="h-[14px] w-[14px]">
            <path d="M1 11L6 4L8 1L8 6L12 7L13 13L3 12Z" fill="#9fa5a9" />
            <path d="M7 8L10 8L10 13L8 13Z" fill="#1d2660" />
            <path d="M10 9H13V13H10Z" fill="#fff" />
          </svg>
        </button>
        <button aria-label="Volume" className="ml-[9px]">
          <svg viewBox="0 0 17 14" className="h-[14px] w-[17px]" fill="none" stroke="#fff" strokeWidth="1.200">
            <path d="M1 5H3.500L7 2V12L3.500 9H1ZM9.500 5Q10.500 7 9.500 9M12 3Q14 7 12 11M14 1Q17.500 7 14 13" />
          </svg>
        </button>
        <time className="ml-[10px] w-[60px] text-center text-[12px] leading-[18px]">
          17:39
          <br />
          18/09/2025
        </time>
        <button aria-label="Notifiche" className="mr-[14px] ml-[18px]">
          <svg viewBox="0 0 24 24" className="h-6 w-6">
            <path d="M1 2H17V15H8L4 19V15H1Z" fill="#fff" />
            <path d="M4 5.500H14M4 8.500H14M4 11.500H10" stroke="#1c2c35" strokeWidth="1.300" />
            <circle cx="16" cy="16" r="7.500" fill="#2b3234" stroke="#9aa0a2" />
            <text x="16" y="20" textAnchor="middle" fontSize="11" fontWeight="700" fill="#fff">5</text>
          </svg>
        </button>
      </div>
    </footer>
  );
}

export default function App() {
  return (
    <div className="flex h-screen flex-col overflow-hidden bg-[#d8d9dc] font-['Open_Sans','Noto_Sans',sans-serif] leading-4">
      <IconGradients />
      <TitleBar />
      <div className="h-5 bg-[#e9eaee] pl-[7px]">
        <nav className="flex w-[884px] justify-between pt-px text-[13px] text-[#2d2f33]">
          {menus.map((m) => (
            <button key={m} className="whitespace-nowrap">{m}</button>
          ))}
        </nav>
      </div>
      <CommandArea />
      <ToolbarArea />

      <div className="flex min-h-0 flex-1">
        <aside className="mt-[3px] mr-[4px] mb-[2px] ml-[2px] w-14 shrink-0 bg-[#e9eaee]">
          <div className="grid grid-cols-2">
            {sideTools.map((tool) => (
              <ToolButton key={tool.name} tool={tool} />
            ))}
          </div>
        </aside>
        <div className="flex min-w-0 flex-1 flex-col border-t-4 border-[#d5d8e2]">
          <div className="flex min-h-0 flex-1 border-r-4 border-[#d5d8e2]">
            <Viewport />
          </div>
          <ViewTabs />
        </div>
      </div>

      <div className="mx-[2px] mb-[2px] bg-[#e9eaee]">
        <OsnapBar />
        <StatusBar />
      </div>
      <Taskbar />
    </div>
  );
}
